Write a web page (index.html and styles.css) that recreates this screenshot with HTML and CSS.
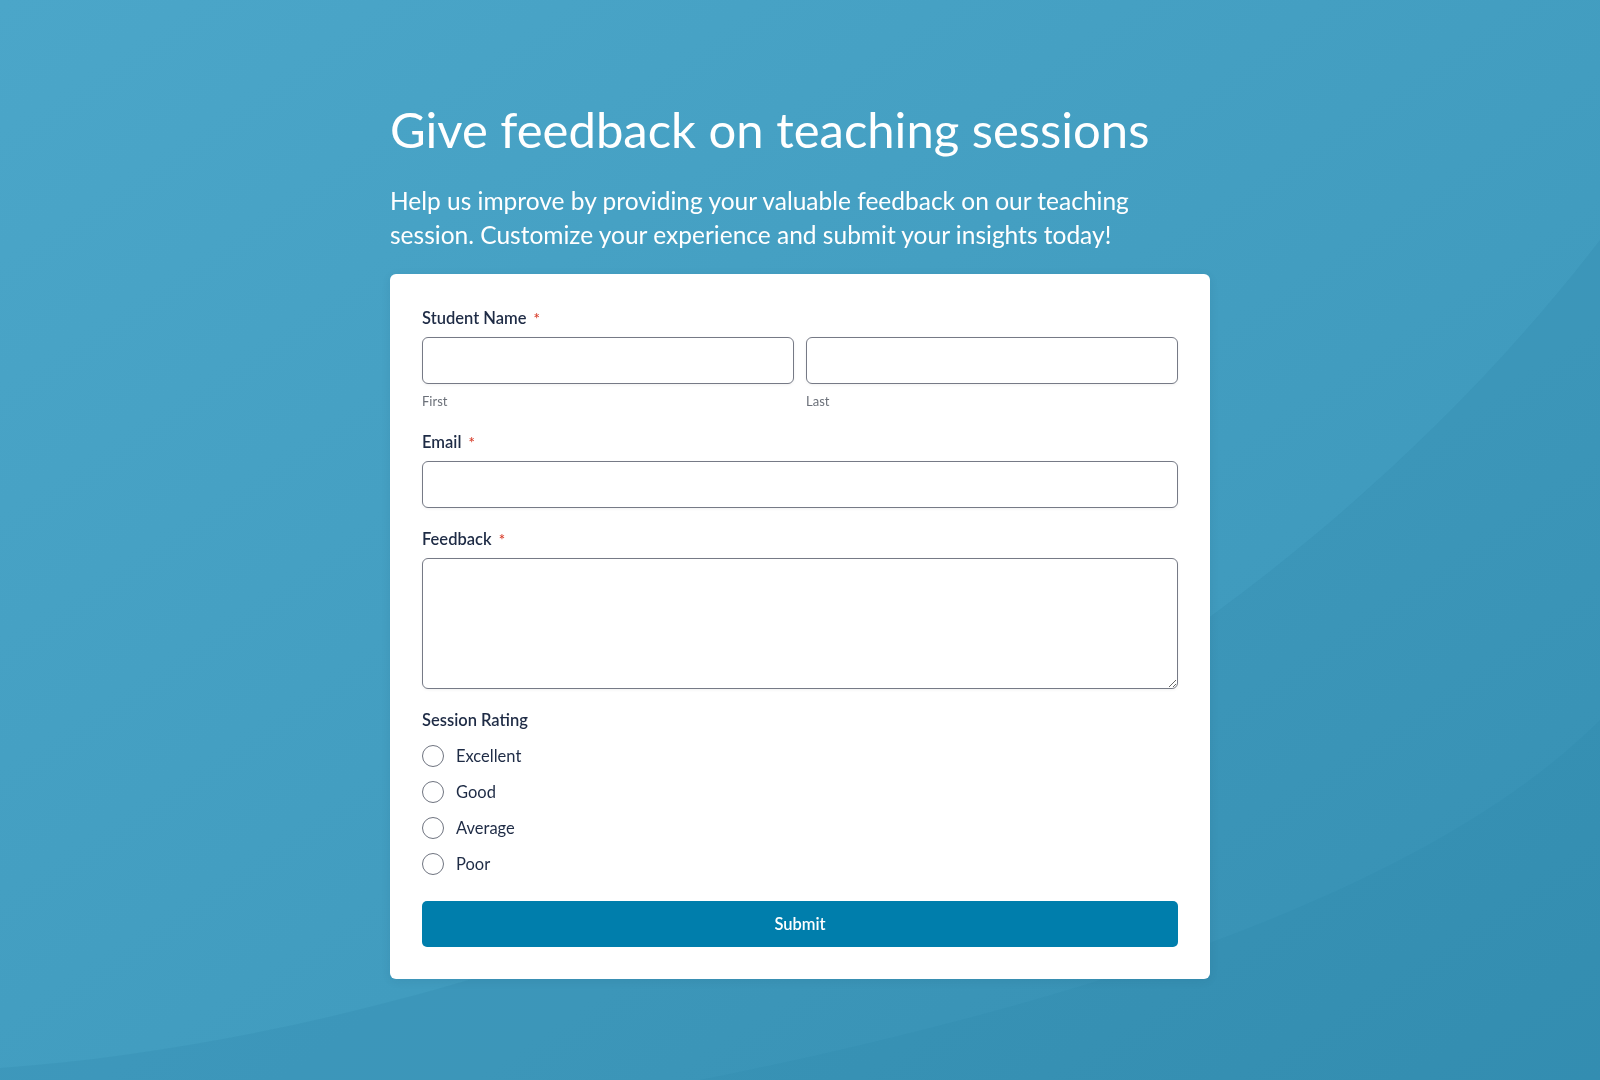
FILE: index.html
```html
<!DOCTYPE html>
<html lang="en">
<head>
    <meta charset="UTF-8">
    <meta name="viewport" content="width=device-width, initial-scale=1.0">
    <title>Give feedback on teaching sessions</title>
    <link rel="stylesheet" href="styles.css">
</head>
<body>
    <!-- Фон с мягкими волнами -->
    <svg class="backdrop" viewBox="0 0 1600 1080" preserveAspectRatio="none" aria-hidden="true">
        <defs>
            <linearGradient id="bgGrad" x1="0" y1="0" x2="1" y2="1">
                <stop offset="0" stop-color="#4ba6c9"/>
                <stop offset="1" stop-color="#3a95b8"/>
            </linearGradient>
        </defs>
        <rect width="1600" height="1080" fill="url(#bgGrad)"/>
        <path d="M0 1068 C 520 1030 1200 760 1600 240 L1600 1080 L0 1080 Z" fill="#1d6f94" opacity="0.11"/>
        <path d="M700 1080 C 1050 1010 1420 900 1600 720 L1600 1080 Z" fill="#1d6f94" opacity="0.08"/>
    </svg>

    <main class="page">
        <h1 class="title">Give feedback on teaching sessions</h1>
        <p class="intro">Help us improve by providing your valuable feedback on our teaching session. Customize your experience and submit your insights today!</p>

        <form class="card" onsubmit="return false">
            <div class="field">
                <label class="label">Student Name <span class="req">*</span></label>
                <div class="name-row">
                    <div class="name-col">
                        <input class="input" type="text" id="firstName">
                        <span class="hint">First</span>
                    </div>
                    <div class="name-col">
                        <input class="input" type="text" id="lastName">
                        <span class="hint">Last</span>
                    </div>
                </div>
            </div>

            <div class="field">
                <label class="label" for="email">Email <span class="req">*</span></label>
                <input class="input" type="email" id="email">
            </div>

            <div class="field">
                <label class="label" for="feedback">Feedback <span class="req">*</span></label>
                <textarea class="input textarea" id="feedback"></textarea>
            </div>

            <div class="field">
                <span class="label">Session Rating</span>
                <div class="radios">
                    <label class="radio"><input type="radio" name="rating"> Excellent</label>
                    <label class="radio"><input type="radio" name="rating"> Good</label>
                    <label class="radio"><input type="radio" name="rating"> Average</label>
                    <label class="radio"><input type="radio" name="rating"> Poor</label>
                </div>
            </div>

            <button class="submit" type="submit">Submit</button>
        </form>
    </main>
</body>
</html>
```

FILE: styles.css
```css
* {
    box-sizing: border-box;
}

body {
    margin: 0;
    min-height: 100vh;
    font-family: Lato, "Open Sans", sans-serif;
    color: #1e2b45;
    background: #449fc3;
}

.backdrop {
    position: fixed;
    top: 0;
    left: 0;
    width: 100%;
    height: 100%;
    z-index: 0;
}

.page {
    position: relative;
    z-index: 1;
    width: 820px;
    margin: 0 auto;
    padding-top: 100px;
}

.title {
    margin: 0;
    font-size: 49px;
    line-height: 58px;
    font-weight: 400;
    color: #ffffff;
}

.intro {
    margin: 26px 0 22px;
    max-width: 780px;
    font-size: 24.5px;
    line-height: 34px;
    color: #ffffff;
}

.card {
    background: #ffffff;
    border-radius: 6px;
    padding: 32px 32px 32px;
    display: flex;
    flex-direction: column;
    gap: 19px;
    box-shadow: 0 2px 10px rgba(0, 40, 70, 0.08);
}

.field {
    display: flex;
    flex-direction: column;
}

.label {
    font-size: 16.5px;
    line-height: 24px;
    font-weight: 600;
    color: #1e2b45;
    margin-bottom: 7px;
}

.req {
    color: #d9412f;
    font-size: 15px;
    margin-left: 3px;
}

.name-row {
    display: flex;
    gap: 12px;
}

.name-col {
    flex: 1;
    display: flex;
    flex-direction: column;
}

.hint {
    margin-top: 8px;
    font-size: 13px;
    line-height: 19px;
    color: #6b7079;
}

.input {
    width: 100%;
    height: 47px;
    border: 1px solid #767a86;
    border-radius: 6px;
    padding: 8px 12px;
    font-family: inherit;
    font-size: 16px;
    background: #ffffff;
    box-shadow: 0 1px 3px rgba(0, 0, 0, 0.06);
}

.textarea {
    height: 131px;
    resize: vertical;
}

.radios {
    display: flex;
    flex-direction: column;
    margin-top: -1px;
}

.radio {
    display: flex;
    align-items: center;
    gap: 12px;
    height: 36px;
    font-size: 16.5px;
    color: #1e2b45;
}

.radio input {
    appearance: none;
    -webkit-appearance: none;
    margin: 0;
    width: 22px;
    height: 22px;
    border: 1.5px solid #6f7480;
    border-radius: 50%;
    background: #ffffff;
}

.radio input:checked {
    border: 6px solid #007eac;
}

.submit {
    height: 46px;
    border: none;
    border-radius: 5px;
    background: #007eac;
    color: #ffffff;
    font-family: inherit;
    font-size: 16.5px;
    font-weight: 600;
    cursor: pointer;
}

.submit:hover {
    background: #006d96;
}
```
